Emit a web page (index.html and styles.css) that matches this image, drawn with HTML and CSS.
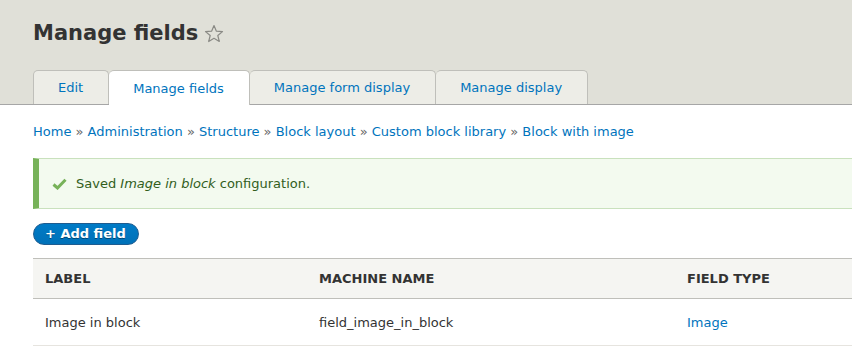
FILE: index.html
```html
<!DOCTYPE html>
<html lang="en">
<head>
    <meta charset="UTF-8">
    <meta name="viewport" content="width=device-width, initial-scale=1.0">
    <title>Manage fields</title>
    <link rel="stylesheet" href="styles.css">
</head>
<body>

<header class="page-header">
    <div class="title-row">
        <h1 class="page-title">Manage fields</h1>
        <svg class="star" width="20" height="20" viewBox="0 0 20 20">
            <path d="M10 1.5 L12.4 7.2 L18.5 7.6 L13.8 11.5 L15.3 17.5 L10 14.3 L4.7 17.5 L6.2 11.5 L1.5 7.6 L7.6 7.2 Z" fill="none" stroke="#8a8a85" stroke-width="1.2" stroke-linejoin="round"/>
        </svg>
    </div>
    <ul class="tabs">
        <li><a href="#">Edit</a></li>
        <li class="active"><a href="#">Manage fields</a></li>
        <li><a href="#">Manage form display</a></li>
        <li><a href="#">Manage display</a></li>
    </ul>
</header>

<div class="content">
    <nav class="breadcrumb">
        <a href="#">Home</a> » <a href="#">Administration</a> » <a href="#">Structure</a> » <a href="#">Block layout</a> » <a href="#">Custom block library</a> » <a href="#">Block with image</a>
    </nav>

    <!-- Status message -->
    <div class="messages status">
        <svg class="check" width="15" height="12" viewBox="0 0 15 12">
            <path d="M1.5 6.5 L5.5 10 L13.5 1.8" fill="none" stroke="#77b259" stroke-width="3"/>
        </svg>
        <span>Saved <em>Image in block</em> configuration.</span>
    </div>

    <a href="#" class="button">+ Add field</a>

    <table class="field-table">
        <thead>
            <tr>
                <th class="col-label">Label</th>
                <th class="col-machine">Machine name</th>
                <th>Field type</th>
            </tr>
        </thead>
        <tbody>
            <tr>
                <td>Image in block</td>
                <td>field_image_in_block</td>
                <td><a href="#">Image</a></td>
            </tr>
        </tbody>
    </table>
</div>

</body>
</html>
```

FILE: styles.css
```css
body {
    font-family: "DejaVu Sans", sans-serif;
    font-size: 13px;
    color: #333;
    margin: 0;
    padding: 0;
    background-color: #fff;
}

a {
    color: #0074bd;
    text-decoration: none;
}

.page-header {
    background-color: #e0e0d8;
    border-bottom: 1px solid #a6a6a6;
    padding: 0 0 0 33px;
}

.title-row {
    display: flex;
    align-items: center;
    height: 70px;
}

.page-title {
    font-size: 21px;
    font-weight: bold;
    margin: 0;
    color: #333;
    padding-bottom: 4px;
}

.star {
    margin-left: 6px;
    margin-bottom: 2px;
}

.tabs {
    list-style: none;
    display: flex;
    margin: 0;
    padding: 0;
}

.tabs li {
    border: 1px solid #bfbfba;
    border-bottom: none;
    border-left: none;
    border-radius: 5px 5px 0 0;
    background-color: #ededE7;
    height: 33px;
    display: flex;
    align-items: center;
}

.tabs li:first-child {
    border-left: 1px solid #bfbfba;
}

.tabs li a {
    padding: 0 25px 0 24px;
}

.tabs li.active {
    background-color: #fff;
    height: 34px;
    margin-bottom: -1px;
}

.content {
    padding: 0 0 0 33px;
}

.breadcrumb {
    padding: 19px 0 0;
    height: 33px;
    color: #666;
}

.messages {
    display: flex;
    align-items: center;
    height: 49px;
    background-color: #f3faef;
    border: 1px solid #c9e1bd;
    border-right: none;
    border-left: 6px solid #77b259;
    color: #325e1c;
    padding-left: 13px;
    margin-top: 1px;
}

.check {
    margin-right: 9px;
}

.button {
    display: inline-block;
    margin-top: 14px;
    padding: 3px 12px 3px 11px;
    line-height: 14px;
    border-radius: 20px;
    border: 1px solid #1e5c90;
    background: linear-gradient(#007bc6, #0071b8);
    color: #fff;
    font-weight: bold;
    text-shadow: 0 1px 0 rgba(0, 0, 0, 0.4);
}

.field-table {
    border-collapse: collapse;
    width: 100%;
    margin-top: 13px;
}

.field-table th {
    background-color: #f5f5f2;
    border-top: 1px solid #bfbfba;
    border-bottom: 1px solid #bfbfba;
    text-align: left;
    text-transform: uppercase;
    font-weight: bold;
    height: 39px;
    padding: 0 12px;
}

.col-label {
    width: 250px;
}

.col-machine {
    width: 344px;
}

.field-table td {
    height: 46px;
    padding: 0 12px;
    border-bottom: 1px solid #e6e4df;
}
```
